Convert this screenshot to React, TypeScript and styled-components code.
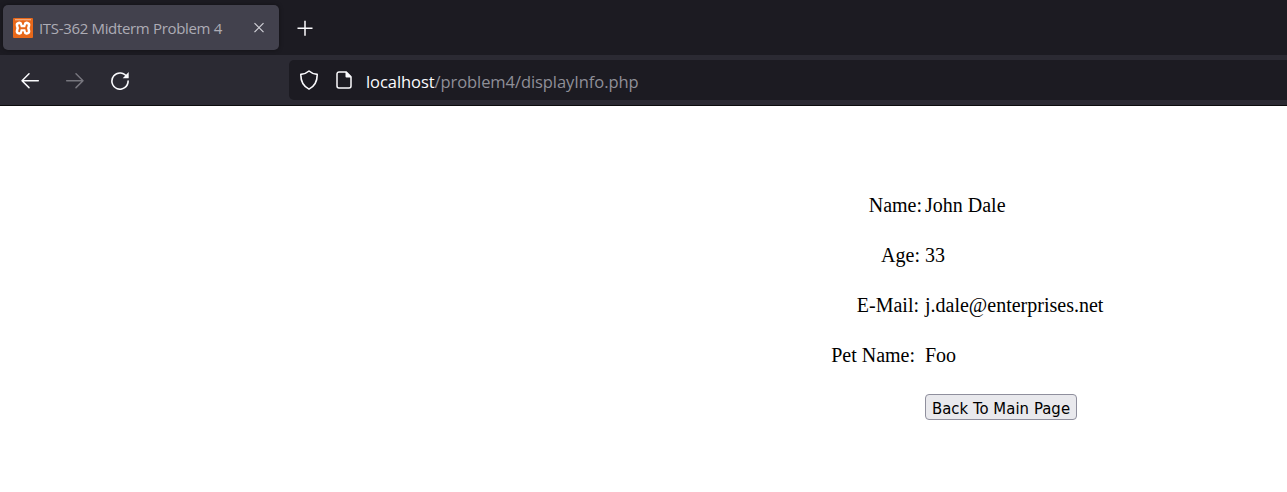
import React from "react";
import styled, { createGlobalStyle } from "styled-components";

const GlobalStyle = createGlobalStyle`
  body {
    margin: 0;
    background: #fff;
  }
`;

const uiFont = `"Open Sans", "Noto Sans", sans-serif`;

const Window = styled.div`
  width: 100%;
  height: 492px;
  display: flex;
  flex-direction: column;
  overflow: hidden;
  background: #fff;
`;

const TabStrip = styled.div`
  height: 55px;
  flex: none;
  box-sizing: border-box;
  padding: 5px 0 5px 3px;
  display: flex;
  align-items: stretch;
  background: #1c1b22;
`;

const Tab = styled.div`
  width: 276px;
  box-sizing: border-box;
  padding: 0 10px;
  display: flex;
  align-items: center;
  border-radius: 5px;
  background: #42414d;
  box-shadow: 0 0 4px rgba(0, 0, 0, 0.4);
`;

const TabTitle = styled.span`
  flex: 1;
  margin-left: 6px;
  font: 400 15px/20px ${uiFont};
  letter-spacing: -0.33px;
  white-space: nowrap;
  color: #adacb5;
`;

const IconButton = styled.button<{ $width: number }>`
  width: ${(p) => p.$width}px;
  padding: 0;
  border: 0;
  display: flex;
  align-items: center;
  justify-content: center;
  background: transparent;
`;

const Toolbar = styled.div`
  height: 51px;
  flex: none;
  box-sizing: border-box;
  padding: 5px 0 5px 7px;
  border-bottom: 1px solid #0c0c0d;
  display: flex;
  background: #2b2a33;
`;

const Navigation = styled.div`
  width: 282px;
  display: flex;
`;

const AddressBar = styled.div`
  flex: 1;
  padding-left: 10px;
  display: flex;
  align-items: center;
  border-radius: 5px 0 0 5px;
  background: #1c1b22;
`;

const BarIcon = styled.span<{ $gap: number }>`
  display: flex;
  margin-right: ${(p) => p.$gap}px;
`;

const Address = styled.span`
  padding-top: 4px;
  font: 400 16.5px/22px ${uiFont};
  letter-spacing: -0.07px;
  white-space: nowrap;
  color: #8f8f98;
`;

const Host = styled.span`
  color: #fbfbfe;
`;

const Page = styled.main`
  padding: 74px 0 0 811px;
  font: 20px/50px "Liberation Serif", "Times New Roman", serif;
  color: #000;
`;

const Details = styled.div`
  display: grid;
  grid-template-columns: 111px auto;
  column-gap: 3px;
`;

const Label = styled.span<{ $inset: number }>`
  padding-right: ${(p) => p.$inset}px;
  text-align: right;
  white-space: nowrap;
`;

const Value = styled.span`
  white-space: nowrap;
`;

const BackButton = styled.button`
  width: 152px;
  height: 26px;
  margin: 14px 0 0 114px;
  padding: 3px 0 0;
  box-sizing: border-box;
  display: block;
  border: 1px solid #8f8f9d;
  border-radius: 4px;
  background: #e9e9ed;
  color: #000;
  font: 16.5px/20px "DejaVu Sans Condensed", "DejaVu Sans", sans-serif;
  font-stretch: condensed;
  letter-spacing: 0.08px;
  white-space: nowrap;
`;

const Favicon = () => (
  <svg width="20" height="20" viewBox="0 0 20 20">
    <rect width="20" height="20" rx="1" fill="#e8681a" />
    <path d="M2 1.700h16" stroke="#f4a777" strokeWidth="1.400" />
    <g fill="none" strokeLinecap="round" strokeLinejoin="round">
      <path d="M6.200 7.200 7 10l-.8 3.200M13.800 7.200 13 10l.8 3.200M7 10h6" stroke="#fff" strokeWidth="7" />
      <path d="M6.200 7.200 7 10l-.8 3.200M13.800 7.200 13 10l.8 3.200M7 10.300h6" stroke="#e8681a" strokeWidth="2" />
      <path d="M10 3v3.300M10 14v3" stroke="#e8681a" strokeWidth="1.400" />
    </g>
  </svg>
);

const CloseIcon = () => (
  <svg width="20" height="20" viewBox="0 0 20 20" fill="none" stroke="#d0d0d7" strokeWidth="1.2">
    <path d="m5.500 5.200 9 9M14.500 5.200l-9 9" />
  </svg>
);

const PlusIcon = () => (
  <svg width="20" height="20" viewBox="0 0 20 20" fill="none" stroke="#fbfbfe" strokeWidth="1.500">
    <path d="M2.500 10.300h15M10 2.800v15" />
  </svg>
);

const ArrowIcon = ({ forward = false }: { forward?: boolean }) => (
  <svg
    width="20"
    height="20"
    viewBox="0 0 20 20"
    fill="none"
    stroke={forward ? "#77767e" : "#fbfbfe"}
    strokeWidth="1.500"
    strokeLinecap="round"
    strokeLinejoin="round"
  >
    <path d={forward ? "M1.700 10.700h16.300M11 3.800l7 6.900-7 6.900" : "M18.300 10.700H2M9 3.800l-7 6.900 7 6.900"} />
  </svg>
);

const ReloadIcon = () => (
  <svg width="20" height="20" viewBox="0 0 20 20">
    <path
      d="M17.100 7.200A8.100 8.100 0 1 0 18.100 11"
      fill="none"
      stroke="#fbfbfe"
      strokeWidth="1.600"
      strokeLinecap="round"
    />
    <path d="M18.700 2v5.800a.5.5 0 0 1-.5.500h-5.500Z" fill="#fbfbfe" />
  </svg>
);

const ShieldIcon = () => (
  <svg width="20" height="20" viewBox="0 0 20 20" fill="none" stroke="#fbfbfe" strokeWidth="1.600" strokeLinejoin="round">
    <path d="M10 1c2.200 2 5 3.100 8.200 3.400.1 6.800-1.800 11.600-8.200 14.700C3.600 16 1.700 11.200 1.800 4.400 5 4.100 7.800 3 10 1Z" />
  </svg>
);

const DocumentIcon = () => (
  <svg width="20" height="20" viewBox="0 0 20 20" fill="none" stroke="#fbfbfe" strokeWidth="1.500" strokeLinejoin="round">
    <path d="M12 1.900H5a2 2 0 0 0-2 2v12.200a2 2 0 0 0 2 2h10a2 2 0 0 0 2-2V6.900Z" />
    <path d="M11.500 1.900v4.500a1 1 0 0 0 1 1H17V6.500L12.500 1.900Z" fill="#fbfbfe" stroke="none" />
  </svg>
);

const fields = [
  { label: "Name:", value: "John Dale", inset: 0 },
  { label: "Age:", value: "33", inset: 2 },
  { label: "E-Mail:", value: "j.dale@enterprises.net", inset: 3 },
  { label: "Pet Name:", value: "Foo", inset: 7 },
];

export default function App() {
  return (
    <Window>
      <GlobalStyle />
      <TabStrip>
        <Tab>
          <Favicon />
          <TabTitle>ITS-362 Midterm Problem 4</TabTitle>
          <IconButton $width={20} aria-label="Close tab">
            <CloseIcon />
          </IconButton>
        </Tab>
        <IconButton $width={52} aria-label="New tab">
          <PlusIcon />
        </IconButton>
      </TabStrip>
      <Toolbar>
        <Navigation>
          <IconButton $width={45} aria-label="Back">
            <ArrowIcon />
          </IconButton>
          <IconButton $width={45} aria-label="Forward" disabled>
            <ArrowIcon forward />
          </IconButton>
          <IconButton $width={45} aria-label="Reload">
            <ReloadIcon />
          </IconButton>
        </Navigation>
        <AddressBar>
          <BarIcon $gap={15}>
            <ShieldIcon />
          </BarIcon>
          <BarIcon $gap={12}>
            <DocumentIcon />
          </BarIcon>
          <Address>
            <Host>localhost</Host>/problem4/displayInfo.php
          </Address>
        </AddressBar>
      </Toolbar>
      <Page>
        <Details>
          {fields.map((f) => (
            <React.Fragment key={f.label}>
              <Label $inset={f.inset}>{f.label}</Label>
              <Value>{f.value}</Value>
            </React.Fragment>
          ))}
        </Details>
        <BackButton>Back To Main Page</BackButton>
      </Page>
    </Window>
  );
}
